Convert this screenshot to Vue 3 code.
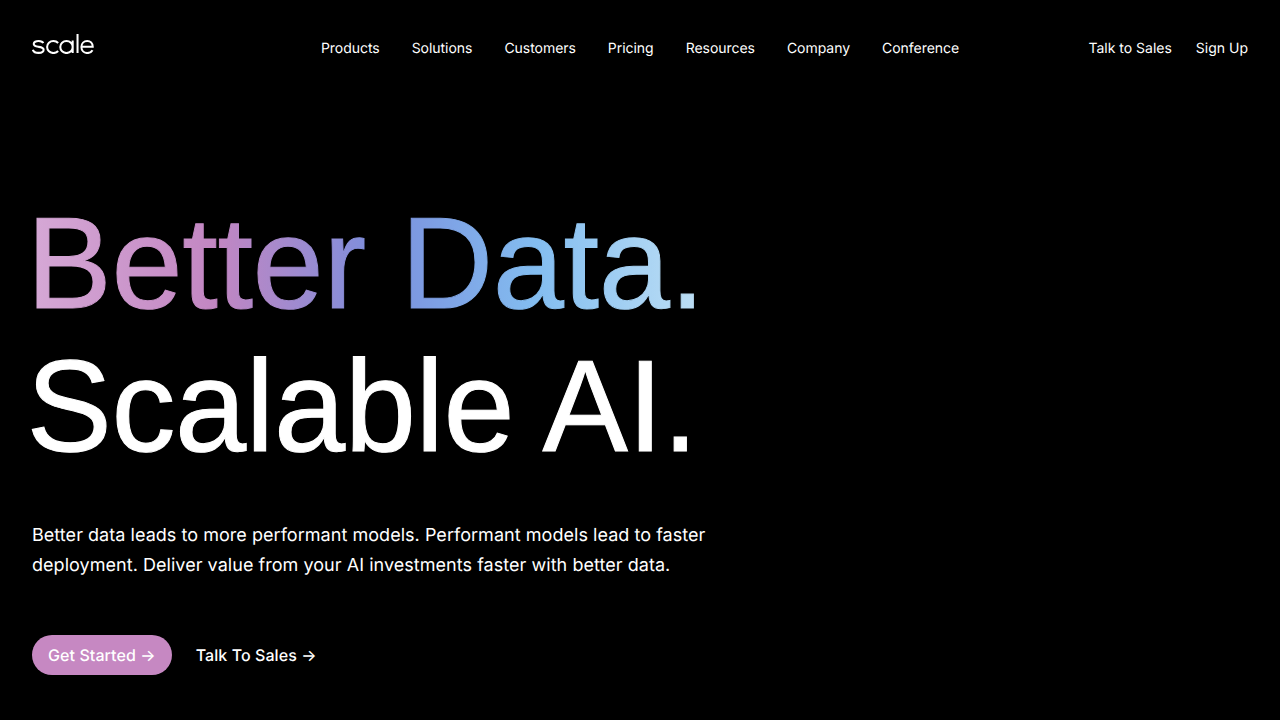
<script setup>
const links = ['Products', 'Solutions', 'Customers', 'Pricing', 'Resources', 'Company', 'Conference']
</script>

<template>
  <div class="page">
    <header class="nav">
      <svg class="logo" width="62" height="20" viewBox="0 0 64 20" preserveAspectRatio="none" fill="none" stroke="#fff" stroke-width="2.1" aria-label="scale">
        <path d="M11.6 9.2C11 7.6 9.3 7 6.8 7C4 7 1.8 7.9 1.8 9.9C1.8 12 4.2 12.4 6.6 12.8C9.2 13.2 12 13.5 12 15.8C12 17.9 9.6 18.9 6.8 18.9C3.9 18.9 1.6 18 .9 15.8"/>
        <path d="M27 9C25.8 7.7 24.1 7 22.1 7C18.4 7 15.6 9.600 15.6 13C15.6 16.400 18.4 19 22.100 19C24.100 19 25.800 18.300 27 17"/>
        <path d="M42 13C42 16.400 39.200 19 35.600 19C32 19 29.200 16.400 29.200 13C29.200 9.600 32 7 35.600 7C39.200 7 42 9.600 42 13ZM42 6.600V19"/>
        <path d="M47 0V19"/>
        <path d="M51.500 12.800H62.700C62.700 9.300 60.200 7 57 7C53.600 7 51 9.500 51 13C51 16.500 53.600 19 57.100 19C59.500 19 61.400 18 62.500 16.200"/>
      </svg>
      <nav class="links">
        <a v-for="link in links" :key="link">{{ link }}</a>
      </nav>
      <div class="actions">
        <a>Talk to Sales</a>
        <a>Sign Up</a>
      </div>
    </header>
    <main class="hero">
      <h1>
        <span class="gradient">Better Data.</span>
        <span class="plain">Scalable AI.</span>
      </h1>
      <p>Better data leads to more performant models. Performant models lead to faster deployment. Deliver value from your AI investments faster with better data.</p>
      <div class="cta">
        <a class="primary">Get Started →</a>
        <a class="secondary">Talk To Sales →</a>
      </div>
    </main>
  </div>
</template>

<style>
html, body { margin: 0; background: #000; }
</style>

<style scoped>
.page {
  width: 1280px;
  height: 720px;
  overflow: hidden;
  background: #000;
  color: #fff;
  font-family: Inter, sans-serif;
  text-rendering: geometricPrecision;
  -webkit-font-smoothing: antialiased;
}
.nav {
  display: grid;
  grid-template-columns: 1fr auto 1fr;
  align-items: center;
  height: 98px;
  padding: 0 32px;
  box-sizing: border-box;
  font-size: 14px;
  line-height: 20px;
}
.logo { display: block; margin: 0 0 10px; }
.links { display: flex; gap: 32px; letter-spacing: -.04px; }
.actions { display: flex; gap: 24px; justify-content: flex-end; }
.hero { padding: 95px 32px 0; }
h1 {
  margin: 0 0 0 -5.5px;
  font-family: "Liberation Sans", Arial, sans-serif;
  font-weight: 400;
  font-size: 128px;
  line-height: 144px;
  letter-spacing: -.4px;
  -webkit-text-stroke: 1px;
}
h1 span {
  display: block;
  width: max-content;
  transform: scaleY(1.02);
  transform-origin: 0 116px;
}
.plain { margin-top: -1px; }
.gradient {
  background: linear-gradient(90deg, #d6a9d6 0%, #c286c2 28%, #7b8fdd 52%, #83bdf0 75%, #bfe0f5 100%);
  -webkit-background-clip: text;
  background-clip: text;
  color: transparent;
}
p {
  margin: 41px 0 0;
  width: 720px;
  font-size: 18px;
  line-height: 30px;
  letter-spacing: .04px;
}
.cta { display: flex; align-items: center; gap: 24px; margin-top: 54px; font-size: 16px; font-weight: 500; letter-spacing: .08px; }
.primary {
  display: block;
  padding: 0 16px;
  height: 40px;
  line-height: 40px;
  border-radius: 20px;
  background: #c688c2;
}
</style>
